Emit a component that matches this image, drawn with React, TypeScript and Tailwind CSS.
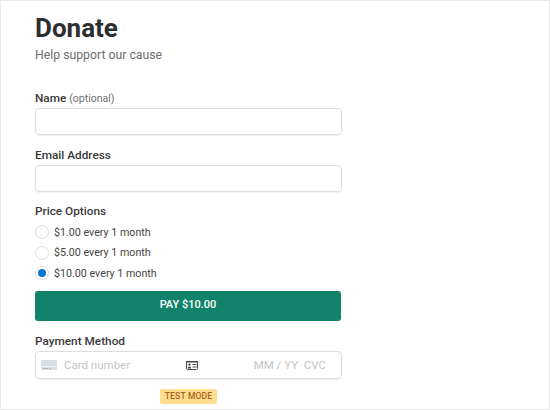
import { useState } from 'react';

const prices = ['$1.00 every 1 month', '$5.00 every 1 month', '$10.00 every 1 month'];

function CardIcon() {
  return (
    <svg width="16" height="10" viewBox="0 0 16 10" className="shrink-0">
      <rect width="16" height="10" rx="1" fill="#d9dee6" />
      <rect x="0" y="6" width="16" height="1" fill="#eef0f3" />
      <rect x="2" y="8" width="5" height="1" fill="#b4bac4" />
      <rect x="8" y="8" width="2" height="1" fill="#b4bac4" />
    </svg>
  );
}

function ContactIcon() {
  return (
    <svg width="12" height="9" viewBox="0 0 12 9" className="shrink-0">
      <rect x="0.5" y="0.5" width="11" height="8" rx="1" fill="#fff" stroke="#4a4a4a" />
      <rect x="0" y="0" width="12" height="1.5" fill="#4a4a4a" />
      <circle cx="3.4" cy="3.6" r="1.2" fill="#4a4a4a" />
      <path d="M1.5 7.6c0-1.5 1-2.2 1.9-2.2s1.9 .7 1.9 2.2z" fill="#4a4a4a" />
      <rect x="6.5" y="3" width="4" height="1" fill="#4a4a4a" />
      <rect x="6.5" y="5.5" width="4" height="1" fill="#4a4a4a" />
    </svg>
  );
}

export default function App() {
  const [selected, setSelected] = useState(2);

  return (
    <div className="h-[410px] w-[550px] overflow-hidden border border-[#e9e9e9] bg-white pl-[34px] pt-[11px] font-['Roboto',sans-serif] text-[#3a3a3a]">
      <div className="w-[307px]">
        <h1 className="text-[26px] font-bold leading-[32px] text-[#2c2e30]">Donate</h1>
        <p className="mt-[1px] text-[12.25px] leading-[20px] text-[#6d6e70]">Help support our cause</p>

        <label className="mt-[24px] block text-[11.8px] font-medium leading-[18px]">
          Name <span className="text-[10.5px] font-normal text-[#6d6e70]">(optional)</span>
        </label>
        <input className="block h-[27px] w-full rounded-[4px] border border-[#dcdee1] shadow-[0_1px_1px_rgba(0,0,0,0.06)]" />

        <label className="mt-[11px] block text-[11.8px] font-medium leading-[18px]">Email Address</label>
        <input className="mt-[1px] block h-[27px] w-full rounded-[4px] border border-[#dcdee1] shadow-[0_1px_1px_rgba(0,0,0,0.06)]" />

        <p className="mt-[10px] text-[11.8px] font-medium leading-[18px]">Price Options</p>
        <div className="mt-[2px] flex flex-col">
          {prices.map((price, i) => (
            <label key={price} className="flex h-[20.5px] items-center gap-[5px] text-[10.7px] text-[#444444]" onClick={() => setSelected(i)}>
              <span className="flex size-[14px] items-center justify-center rounded-full border border-[#dcdee1] bg-white">
                {selected === i && <span className="size-[8px] rounded-full bg-[#0b76cc]" />}
              </span>
              <span className="pt-[1px]">{price}</span>
            </label>
          ))}
        </div>

        <button className="mt-[7px] block h-[30px] w-[306px] rounded-[3px] bg-[#10836a] text-[11px] font-medium text-white">
          PAY $10.00
        </button>

        <p className="mt-[11px] text-[11.8px] font-medium leading-[18px]">Payment Method</p>
        <div className="mt-[1px] flex h-[28px] items-center rounded-[4px] border border-[#dcdee1] pl-[5px] pr-[15px] pt-[1px] shadow-[0_1px_1px_rgba(0,0,0,0.06)]">
          <CardIcon />
          <span className="ml-[7px] pt-[1px] text-[11.5px] text-[#c2c4c8]">Card number</span>
          <span className="ml-[56px]"><ContactIcon /></span>
          <span className="ml-auto pt-[1px] text-[11.5px] text-[#c2c4c8]">MM / YY&nbsp; CVC</span>
        </div>

        <div className="mt-[10px] flex justify-center">
          <span className="flex h-[15px] w-[57px] items-center justify-center rounded-[2px] bg-[#ffdc8f] text-[8.5px] font-medium tracking-[0.2px] text-[#a5621a]">
            TEST MODE
          </span>
        </div>
      </div>
    </div>
  );
}
